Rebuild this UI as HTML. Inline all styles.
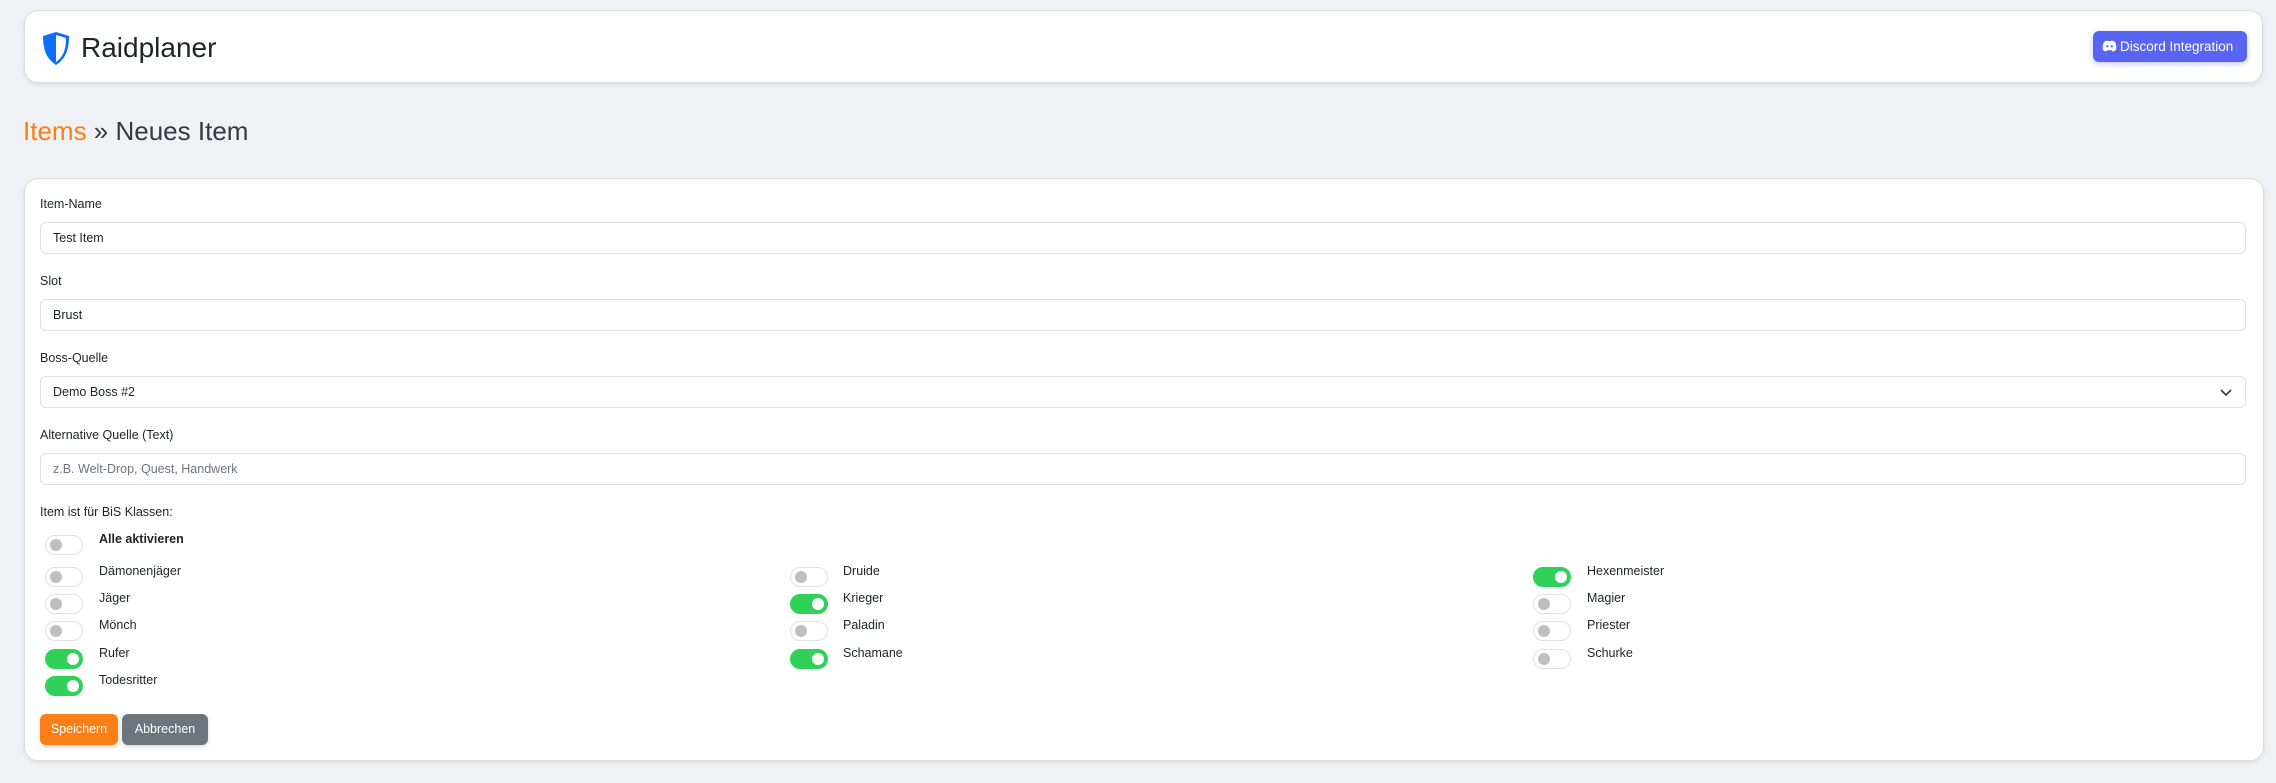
<!DOCTYPE html>
<html><head><meta charset="utf-8"><style>
*{box-sizing:border-box;margin:0;padding:0}
body{width:2276px;height:783px;background:#f0f1f4;font-family:"Liberation Sans",sans-serif;color:#212529;position:relative;overflow:hidden}
.card{position:absolute;background:#fff;border:1px solid #dcdde0;border-radius:14px;box-shadow:0 2px 4px rgba(0,0,0,.08)}
.abs{position:absolute}
.lbl{position:absolute;left:40px;font-size:12.5px;color:#212529}
.inp{position:absolute;left:40px;width:2206px;height:32px;border:1px solid #dee2e6;border-radius:6px;font-size:12.5px;padding-left:12px;line-height:30px;color:#212529}
.sw{position:absolute;width:38px;height:20px;border:1px solid #dee2e6;border-radius:10px;background:#fff}
.sw::after{content:"";position:absolute;left:4px;top:3px;width:12px;height:12px;border-radius:50%;background:#bfbfbf}
.sw.on{background:#30d158;border-color:#30d158}
.sw.on::after{left:21px;background:#fff}
.t{position:absolute;font-size:12.5px;color:#212529}
</style></head><body>
<div class="card" style="left:24px;top:10px;width:2239px;height:73px"></div>
<svg class="abs" style="left:41px;top:31px" width="30" height="35" viewBox="0 0 30 35">
<path d="M15 1 L28 5 C28 20 24 28 15 34 C6 28 2 20 2 5 Z" fill="#0d6efd"/>
<path d="M15 4 L25 7 C25 19 22 26 15 31 Z" fill="#fff"/>
</svg>
<div class="abs" style="left:81px;top:32px;font-size:28px;color:#212529">Raidplaner</div>
<div class="abs" style="left:2093px;top:31px;width:154px;height:31px;background:#5865f2;border-radius:6px;color:#fff;font-size:13.5px;line-height:31px;padding-left:27px;box-shadow:0 2px 6px rgba(88,101,242,.35)">Discord Integration</div>
<svg class="abs" style="left:2102px;top:40px" width="15" height="12" viewBox="0 0 15 12"><path d="M2 2 Q5 0 6 1 L9 1 Q10 0 13 2 Q15 6 14 10 Q12 12 10 11 L9.5 10 Q7.5 10.7 5.5 10 L5 11 Q3 12 1 10 Q0 6 2 2Z" fill="#fff"/><circle cx="5.3" cy="6.3" r="1.2" fill="#5865f2"/><circle cx="9.7" cy="6.3" r="1.2" fill="#5865f2"/></svg>
<div class="abs" style="left:23px;top:116px;font-size:26px;color:#343a40"><span style="color:#fd7e14">Items</span> » Neues Item</div>
<div class="card" style="left:24px;top:178px;width:2240px;height:583px"></div>
<div class="lbl" style="top:197px">Item-Name</div>
<div class="inp" style="top:222px">Test Item</div>
<div class="lbl" style="top:274px">Slot</div>
<div class="inp" style="top:299px">Brust</div>
<div class="lbl" style="top:351px">Boss-Quelle</div>
<div class="inp" style="top:376px">Demo Boss #2</div>
<svg class="abs" style="left:2220px;top:387px" width="12" height="10" viewBox="0 0 12 10"><path d="M1 3 L6 8 L11 3" fill="none" stroke="#343a40" stroke-width="1.6"/></svg>
<div class="lbl" style="top:428px">Alternative Quelle (Text)</div>
<div class="inp" style="top:453px;color:#6c757d">z.B. Welt-Drop, Quest, Handwerk</div>
<div class="lbl" style="top:505px">Item ist für BiS Klassen:</div>
<div class="sw" style="left:45px;top:535px"></div><div class="t" style="left:99px;top:532px;font-weight:bold">Alle aktivieren</div>

<div class="sw" style="left:45px;top:567px"></div><div class="t" style="left:99px;top:564px">Dämonenjäger</div>
<div class="sw" style="left:45px;top:594px"></div><div class="t" style="left:99px;top:591px">Jäger</div>
<div class="sw" style="left:45px;top:621px"></div><div class="t" style="left:99px;top:618px">Mönch</div>
<div class="sw on" style="left:45px;top:649px"></div><div class="t" style="left:99px;top:646px">Rufer</div>
<div class="sw on" style="left:45px;top:676px"></div><div class="t" style="left:99px;top:673px">Todesritter</div>

<div class="sw" style="left:790px;top:567px"></div><div class="t" style="left:843px;top:564px">Druide</div>
<div class="sw on" style="left:790px;top:594px"></div><div class="t" style="left:843px;top:591px">Krieger</div>
<div class="sw" style="left:790px;top:621px"></div><div class="t" style="left:843px;top:618px">Paladin</div>
<div class="sw on" style="left:790px;top:649px"></div><div class="t" style="left:843px;top:646px">Schamane</div>

<div class="sw on" style="left:1533px;top:567px"></div><div class="t" style="left:1587px;top:564px">Hexenmeister</div>
<div class="sw" style="left:1533px;top:594px"></div><div class="t" style="left:1587px;top:591px">Magier</div>
<div class="sw" style="left:1533px;top:621px"></div><div class="t" style="left:1587px;top:618px">Priester</div>
<div class="sw" style="left:1533px;top:649px"></div><div class="t" style="left:1587px;top:646px">Schurke</div>

<div class="abs" style="left:40px;top:714px;width:78px;height:31px;background:#fd7e14;border-radius:6px;color:#fff;font-size:12.5px;line-height:31px;text-align:center;box-shadow:0 2px 4px rgba(0,0,0,.15)">Speichern</div>
<div class="abs" style="left:122px;top:714px;width:86px;height:31px;background:#6c757d;border-radius:6px;color:#fff;font-size:12.5px;line-height:31px;text-align:center;box-shadow:0 2px 4px rgba(0,0,0,.15)">Abbrechen</div>
</body></html>
